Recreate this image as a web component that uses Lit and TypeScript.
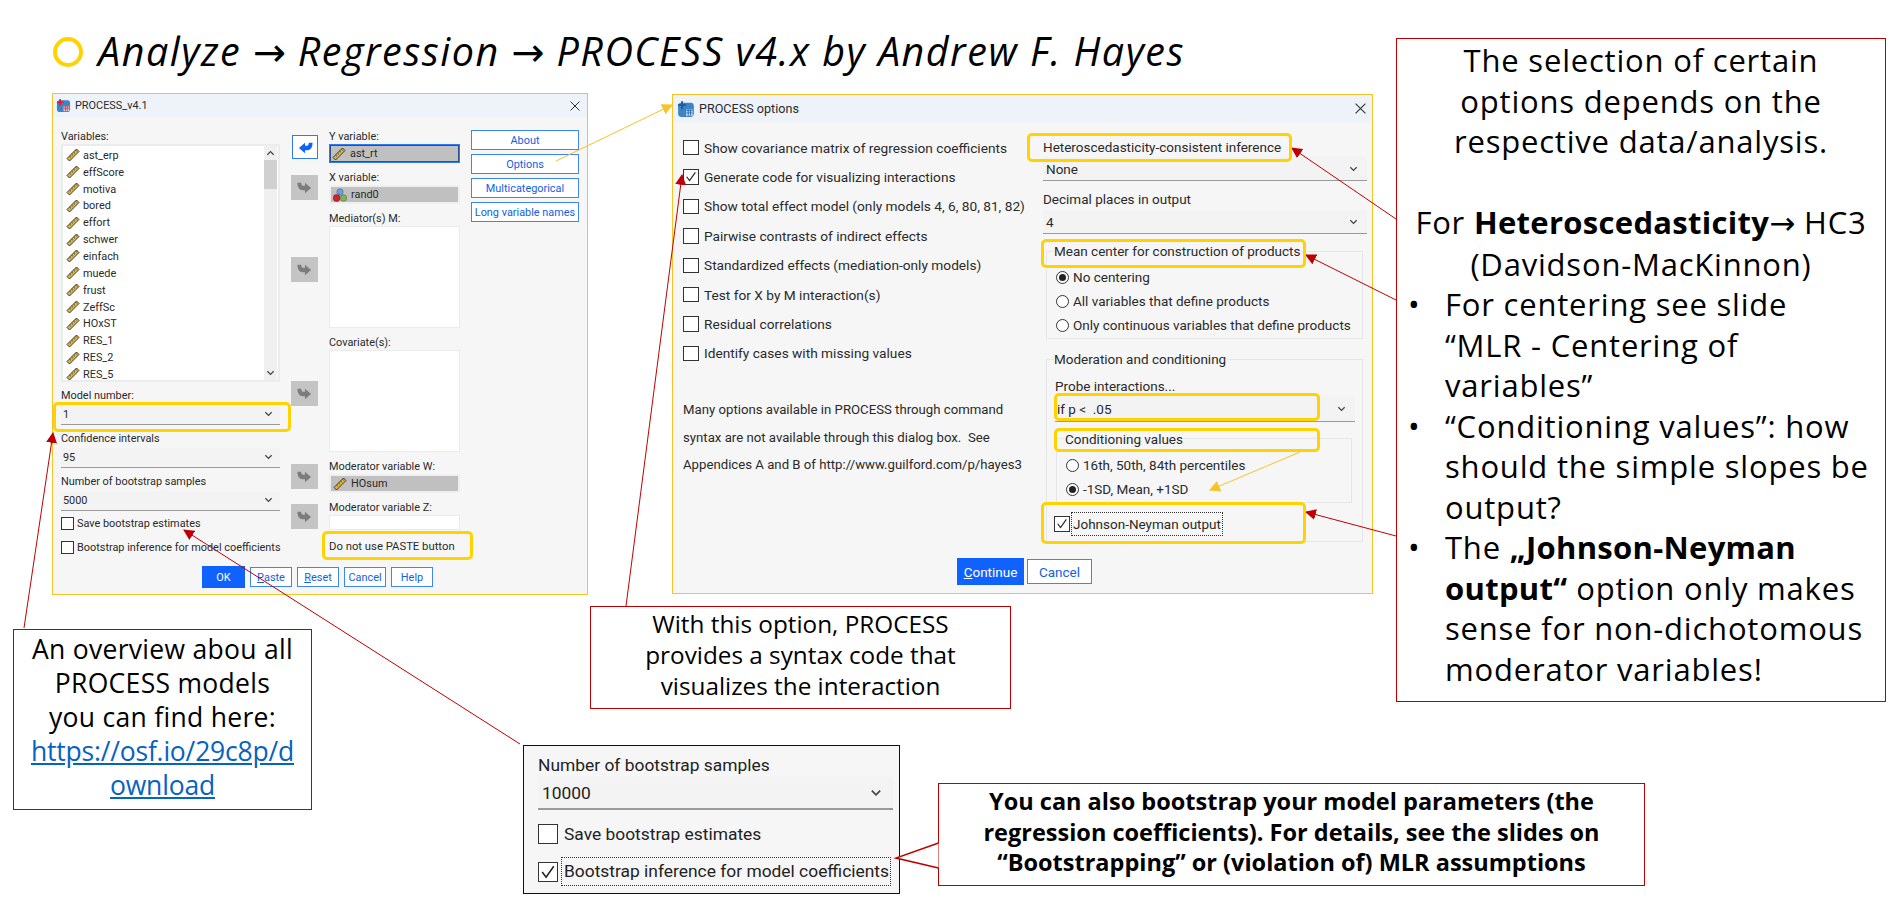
import { LitElement, css, html, svg } from 'lit'
import { customElement } from 'lit/decorators.js'

const VARIABLES = ['ast_erp', 'effScore', 'motiva', 'bored', 'effort', 'schwer', 'einfach', 'muede', 'frust', 'ZeffSc', 'HOxST', 'RES_1', 'RES_2', 'RES_5']
const ARROW_TOPS = [18, 16, 57, 99, 58, 15]
const OPTIONS = [
  'Show covariance matrix of regression coefficients',
  'Generate code for visualizing interactions',
  'Show total effect model (only models 4, 6, 80, 81, 82)',
  'Pairwise contrasts of indirect effects',
  'Standardized effects (mediation-only models)',
  'Test for X by M interaction(s)',
  'Residual correlations',
  'Identify cases with missing values',
]
// x, y, w, h of the yellow marker frames
const MARKERS = [
  [53, 402, 238, 30],
  [322, 531, 151, 29],
  [1027, 133, 265, 29],
  [1041, 239, 265, 29],
  [1054, 393, 266, 28],
  [1054, 428, 266, 24],
  [1041, 502, 265, 42],
]
const RED_ARROWS = [
  [24, 628, 53, 433],
  [520, 744, 184, 530],
  [626, 606, 682, 175],
  [1396, 219, 1292, 148],
  [1396, 300, 1306, 255],
  [1396, 536, 1306, 512],
]
const YELLOW_ARROWS = [
  [556, 161, 672, 105],
  [1300, 452, 1210, 490],
]

const ruler = () => html`<svg class="ico" viewBox="0 0 14 14">
  <path d="M1 10.5 10.5 1 13 3.5 3.5 13Z" fill="#e0b63c" stroke="#3a3a3a" stroke-width="1"/>
  <path d="M3.6 8 5 9.4M5.6 6 7 7.4M7.6 4 9 5.4M9.6 2.2 11 3.6" stroke="#3a3a3a" stroke-width=".8"/>
</svg>`

const nominal = () => html`<svg class="ico" viewBox="0 0 14 14">
  <circle cx="7" cy="4" r="3.2" fill="#6d9be0" stroke="#48689a" stroke-width=".6"/>
  <circle cx="3.6" cy="10" r="3.4" fill="#d3222b" stroke="#7d1a1f" stroke-width=".6"/>
  <circle cx="10.6" cy="10" r="3.2" fill="#7fb356" stroke="#52763a" stroke-width=".6"/>
</svg>`

const moveArrow = (active: boolean) => html`<svg class="move" viewBox="0 0 16 16">
  ${active
    ? svg`<path d="M1 8.5 7.5 3V6H9.5C11 6 11.5 5 11.5 3H15.5C15.5 8 13.5 11 10 11H7.5V14Z" fill="#0f62fe"/>`
    : svg`<path d="M15 8.5 8.5 3V6H6.5C5 6 4.5 5 4.5 3H.5C.5 8 2.5 11 6 11H8.5V14Z" fill="#7c7c7c"/>`}
</svg>`

const appIcon = (cross: string) => html`<svg class="app" viewBox="0 0 16 16">
  <rect x="1" y="2.5" width="14" height="12.5" rx="3" fill="#3d84c6"/>
  <rect x="8" y="8.5" width="6" height="5.5" fill="#c9dff2"/>
  <path d="M8 9.5H14M8 11.5H14M10 8.5V14M12 8.5V14" stroke="${cross}" stroke-width=".7"/>
  <path d="M1 4.5H8M4.5 1V8" stroke="${cross}" stroke-width="1.8"/>
</svg>`

const chevron = () => html`<svg class="chev" viewBox="0 0 10 6">
  <path d="M1.5 1 5 4.5 8.5 1" fill="none" stroke="#444" stroke-width="1.4"/>
</svg>`

const closeX = () => html`<svg class="close" viewBox="0 0 10 10">
  <path d="M.5 .5 9.5 9.5M9.5 .5 .5 9.5" stroke="#333" stroke-width="1"/>
</svg>`

const check = (on = false) => html`<span class="check">
  ${on ? html`<svg viewBox="0 0 14 14"><path d="M2.5 7 5.5 11 11.5 2.5" fill="none" stroke="#222" stroke-width="1.2"/></svg>` : ''}
</span>`

const radio = (on = false) => html`<span class="radio ${on ? 'on' : ''}"></span>`

const combo = (text: string, extra = '') => html`<div class="combo ${extra}"><span>${text}</span>${chevron()}</div>`

@customElement('app-root')
export class AppRoot extends LitElement {
  static styles = css`
    :host {
      display: block;
      position: relative;
      width: 1897px;
      height: 898px;
      overflow: hidden;
      background: #fff;
      font-family: 'Open Sans', Lato, sans-serif;
      color: #000;
    }
    .headline {
      position: absolute;
      left: 53px;
      top: 30px;
      display: flex;
      align-items: center;
      gap: 15px;
      font-size: 39.5px;
      font-style: italic;
      line-height: 42px;
      white-space: nowrap;
      letter-spacing: 1.5px;
    }
    .dot {
      width: 30px;
      height: 30px;
      box-sizing: border-box;
      border: 4px solid #ffd200;
      border-radius: 50%;
    }
    .arrow {
      font-family: 'DejaVu Sans', sans-serif;
      font-style: normal;
      letter-spacing: 0;
    }

    /* dialogs */
    .dialog {
      position: absolute;
      box-sizing: border-box;
      background: #f6f6f6;
      border: 1px solid #f7c325;
      font-family: Roboto, 'Liberation Sans', sans-serif;
      color: #2a2a2a;
    }
    .process {
      left: 52px;
      top: 93px;
      width: 536px;
      height: 502px;
      font-size: 10.9px;
    }
    .options {
      left: 672px;
      top: 94px;
      width: 701px;
      height: 500px;
      font-size: 13.5px;
    }
    .titlebar {
      display: flex;
      align-items: center;
      gap: 4px;
      background: #eef3fa;
      padding: 0 6px 0 3px;
    }
    .process .titlebar {
      height: 23px;
    }
    .options .titlebar {
      height: 27px;
      padding-left: 4px;
      font-size: 12.6px;
    }
    .app {
      width: 15px;
      height: 15px;
    }
    .options .app {
      width: 18px;
      height: 18px;
    }
    .close {
      width: 10px;
      height: 10px;
      margin-left: auto;
    }
    .process .close {
      margin-right: 1px;
    }
    .options .close {
      width: 11px;
      height: 11px;
    }
    .label {
      line-height: 15px;
      height: 15px;
      white-space: nowrap;
    }
    .ico {
      width: 14px;
      height: 14px;
      flex: none;
    }

    .columns {
      display: grid;
      grid-template-columns: 219px 27px 131px 108px;
      column-gap: 11px;
      padding: 12px 0 0 8px;
      height: 443px;
      box-sizing: border-box;
    }
    .col {
      display: flex;
      flex-direction: column;
    }
    .list {
      display: flex;
      height: 238px;
      box-sizing: border-box;
      border: 2px solid #ececec;
      background: #fff;
      overflow: hidden;
    }
    .rows {
      flex: 1;
      padding: 1px 0 0 3px;
    }
    .row {
      display: flex;
      align-items: center;
      gap: 3px;
      height: 16.85px;
    }
    .scroll {
      width: 13px;
      display: flex;
      flex-direction: column;
      align-items: center;
      background: #f0f0f0;
      margin-right: 1px;
    }
    .scroll .chev {
      margin: 4px 0;
    }
    .scroll .up {
      transform: rotate(180deg);
    }
    .thumb {
      width: 13px;
      height: 29px;
      background: #d0d0d0;
    }
    .scroll .chev:last-child {
      margin-top: auto;
    }
    .fields {
      display: flex;
      flex-direction: column;
      gap: 6.5px;
      margin-top: 6px;
    }
    .combo {
      display: flex;
      align-items: center;
      justify-content: space-between;
      box-sizing: border-box;
      height: 20px;
      padding: 0 7px 0 2px;
      background: #f3f3f3;
      border-bottom: 1.5px solid #9a9a9a;
    }
    .process .combo {
      margin-top: 1.5px;
    }
    .chev {
      width: 9px;
      height: 6px;
      flex: none;
    }
    .check {
      box-sizing: border-box;
      width: 13px;
      height: 13px;
      flex: none;
      background: #fff;
      border: 1px solid #333;
      display: flex;
    }
    .check svg {
      width: 100%;
      height: 100%;
    }
    .checkline {
      display: flex;
      align-items: center;
      gap: 3px;
      white-space: nowrap;
    }
    .process .checkline {
      height: 13px;
      margin-top: 11px;
    }
    .process .checkline.first {
      margin-top: 6.5px;
    }
    .move-btn {
      display: flex;
      align-items: center;
      justify-content: center;
      box-sizing: border-box;
      height: 25px;
      background: #c4c4c4;
    }
    .move-btn.active {
      height: 24px;
      margin-left: 1px;
      background: #fff;
      border: 1.5px solid #2f7bf6;
    }
    .move {
      width: 15px;
      height: 15px;
    }
    .stack {
      gap: 7px;
    }
    .slot {
      display: flex;
      align-items: center;
      gap: 4px;
      box-sizing: border-box;
      height: 19px;
      padding: 0 2px;
      background: #c0c0c0;
      border: 2px solid #efefef;
    }
    .slot.focus {
      border: 1px solid #2f7bf6;
      outline: 1px solid #2e4f8a;
      outline-offset: -2px;
    }
    .slot.blank {
      background: #fff;
      border: 1.5px solid #ebebeb;
      height: 15px;
    }
    .slot.tall {
      height: 102px;
    }
    .nopaste {
      font-size: 11.3px;
      line-height: 14px;
      margin-top: 3px;
      white-space: nowrap;
    }
    .side {
      display: flex;
      flex-direction: column;
      gap: 4px;
      padding-top: 1px;
    }
    .btn {
      display: flex;
      align-items: center;
      justify-content: center;
      box-sizing: border-box;
      height: 20px;
      background: #fff;
      border: 1.5px solid #3d86f5;
      color: #1260e8;
      white-space: nowrap;
    }
    .btn.primary {
      background: #0f62fe;
      border-color: #0f62fe;
      color: #fff;
    }
    .footer {
      display: flex;
      align-items: center;
      gap: 5px;
      margin: 6px 0 0 149px;
    }
    .footer .btn {
      width: 42px;
    }
    .footer .btn.primary {
      width: 43px;
      height: 22px;
    }
    .ul {
      text-decoration: underline;
    }

    /* options dialog */
    .opts-body {
      display: grid;
      grid-template-columns: 360px 324px;
      padding-left: 10px;
      height: 436px;
      box-sizing: border-box;
    }
    .opts-left {
      padding-top: 11px;
      font-size: 13.7px;
    }
    .opts-left .checkline {
      height: 29.4px;
      gap: 5px;
    }
    .options .check {
      width: 16px;
      height: 15.5px;
      border-color: #333;
    }
    .note {
      margin-top: 28px;
      font-size: 13.2px;
      line-height: 27.5px;
      white-space: nowrap;
    }
    .opts-right {
      display: flex;
      flex-direction: column;
      padding-top: 11px;
    }
    .opts-right .combo {
      height: 24px;
      padding: 0 9px 0 3px;
      flex: none;
    }
    .cap {
      line-height: 14px;
      white-space: nowrap;
    }
    .cap.hc {
      margin: 7px 0 3px;
    }
    .cap.dec {
      margin: 11px 0 4px;
    }
    .group {
      position: relative;
      box-sizing: border-box;
      width: 316.5px;
      margin-left: 3px;
      border: 1px solid #e6e6e6;
      flex: none;
    }
    .group.center {
      margin-top: 17px;
      height: 88px;
      padding: 13px 0 0 9px;
    }
    .group.moderation {
      margin-top: 20px;
      height: 183px;
      padding-top: 19px;
    }
    .group.values {
      width: 296px;
      height: 65px;
      margin: 16px 0 0 9px;
      padding: 14px 0 0 9px;
    }
    .legend {
      position: absolute;
      left: 6px;
      top: -8px;
      line-height: 14px;
      padding: 0 1px;
      background: #f6f6f6;
      white-space: nowrap;
    }
    .group.values .legend {
      left: 7px;
      top: -7px;
    }
    .radioline {
      display: flex;
      align-items: center;
      gap: 4px;
      height: 24px;
      white-space: nowrap;
    }
    .radio {
      box-sizing: border-box;
      width: 13px;
      height: 13px;
      flex: none;
      border: 1px solid #333;
      border-radius: 50%;
      background: #fff;
      display: flex;
      align-items: center;
      justify-content: center;
    }
    .radio.on::after {
      content: '';
      width: 7px;
      height: 7px;
      border-radius: 50%;
      background: #222;
    }
    .probe {
      margin-left: 8px;
      line-height: 14px;
    }
    .opts-right .combo.probe-combo {
      width: 300px;
      height: 26px;
      margin: 3px 0 0 8px;
      padding: 0 9px 0 2px;
    }
    .jn {
      display: flex;
      align-items: center;
      gap: 1px;
      margin: 9px 0 0 7px;
      height: 24px;
    }
    .dotted {
      border: 1px dotted #333;
      line-height: 22px;
      padding: 0 1px;
      white-space: nowrap;
    }
    .opts-footer {
      display: flex;
      align-items: center;
      gap: 3px;
      margin-left: 284px;
    }
    .opts-footer .btn {
      width: 65px;
      height: 25px;
    }
    .opts-footer .btn.primary {
      width: 67px;
      height: 27px;
    }

    /* inset crop */
    .inset {
      position: absolute;
      left: 523px;
      top: 745px;
      width: 377px;
      height: 149px;
      box-sizing: border-box;
      border: 1.5px solid #111;
      background: #f6f6f6;
      padding: 9px 6px 0 14px;
      font-family: Roboto, 'Liberation Sans', sans-serif;
      font-size: 17.4px;
      color: #222;
    }
    .inset .cap {
      line-height: 20px;
    }
    .inset .combo {
      height: 33px;
      margin-top: 2px;
      padding: 0 11px 0 4px;
      border-bottom-width: 2px;
    }
    .inset .chev {
      width: 12px;
      height: 8px;
    }
    .inset .checkline {
      gap: 6px;
      height: 20px;
      margin-top: 14px;
    }
    .inset .checkline.last {
      gap: 3px;
      height: 29px;
      margin-top: 13px;
    }
    .inset .check {
      width: 20px;
      height: 20px;
      border-width: 1.5px;
    }
    .inset .dotted {
      line-height: 27px;
      padding: 0 1px 0 2px;
    }

    /* callouts */
    .callout {
      position: absolute;
      box-sizing: border-box;
      background: #fff;
      border: 1.5px solid #c00000;
      text-align: center;
    }
    .callout.models {
      left: 13px;
      top: 629px;
      width: 299px;
      height: 181px;
      padding-top: 2px;
      font-size: 26.5px;
      line-height: 34px;
      letter-spacing: 0.3px;
    }
    .models a {
      color: #0563c1;
      text-decoration: underline;
      letter-spacing: -0.2px;
    }
    .callout.syntax {
      left: 590px;
      top: 606px;
      width: 421px;
      height: 103px;
      padding-top: 1px;
      font-size: 24.3px;
      line-height: 31px;
    }
    .callout.bootstrap {
      left: 938px;
      top: 783px;
      width: 707px;
      height: 103px;
      padding-top: 2px;
      font-size: 23.5px;
      line-height: 30.5px;
      font-weight: 700;
    }
    .callout.advice {
      left: 1396px;
      top: 38px;
      width: 490px;
      height: 664px;
      padding: 1px 0 0 0;
      font-size: 31px;
      line-height: 40.5px;
      letter-spacing: 0.8px;
    }
    .advice b {
      letter-spacing: 0.3px;
    }
    .blank-line {
      height: 40.5px;
    }
    .bullets {
      margin: 0;
      padding: 0;
      list-style: none;
      text-align: left;
    }
    .bullets li {
      display: grid;
      grid-template-columns: 37px 1fr;
      padding-left: 11px;
      white-space: nowrap;
    }
    .wires {
      position: absolute;
      left: 0;
      top: 0;
      pointer-events: none;
    }
    .marker {
      position: absolute;
      box-sizing: border-box;
      border: 3px solid #ffd200;
      border-radius: 5px;
      pointer-events: none;
    }
  `

  processDialog() {
    return html`<section class="dialog process">
      <div class="titlebar">${appIcon('#d81e2c')}<span>PROCESS_v4.1</span>${closeX()}</div>
      <div class="columns">
        <div class="col">
          <div class="label">Variables:</div>
          <div class="list">
            <div class="rows">
              ${VARIABLES.map((v) => html`<div class="row">${ruler()}<span>${v}</span></div>`)}
            </div>
            <div class="scroll">
              <svg class="chev up" viewBox="0 0 10 6"><path d="M1.5 1 5 4.5 8.5 1" fill="none" stroke="#444" stroke-width="1.4"/></svg>
              <div class="thumb"></div>
              ${chevron()}
            </div>
          </div>
          <div class="fields">
            <div><div class="label">Model number:</div>${combo('1')}</div>
            <div><div class="label">Confidence intervals</div>${combo('95')}</div>
            <div><div class="label">Number of bootstrap samples</div>${combo('5000')}</div>
          </div>
          <div class="checkline first">${check()}<span>Save bootstrap estimates</span></div>
          <div class="checkline">${check()}<span>Bootstrap inference for model coefficients</span></div>
        </div>
        <div class="col">
          ${ARROW_TOPS.map(
            (gap, i) => html`<div class="move-btn ${i === 0 ? 'active' : ''}" style="margin-top:${i === 0 ? 6 : gap}px">${moveArrow(i === 0)}</div>`,
          )}
        </div>
        <div class="col stack">
          <div><div class="label">Y variable:</div><div class="slot focus">${ruler()}<span>ast_rt</span></div></div>
          <div><div class="label">X variable:</div><div class="slot">${nominal()}<span>rand0</span></div></div>
          <div><div class="label">Mediator(s) M:</div><div class="slot blank tall"></div></div>
          <div><div class="label">Covariate(s):</div><div class="slot blank tall"></div></div>
          <div><div class="label">Moderator variable W:</div><div class="slot">${ruler()}<span>HOsum</span></div></div>
          <div><div class="label">Moderator variable Z:</div><div class="slot blank"></div></div>
          <div class="nopaste">Do not use PASTE button</div>
        </div>
        <div class="side">
          <div class="btn">About</div>
          <div class="btn">Options</div>
          <div class="btn">Multicategorical</div>
          <div class="btn">Long variable names</div>
        </div>
      </div>
      <div class="footer">
        <div class="btn primary">OK</div>
        <div class="btn"><span class="ul">P</span>aste</div>
        <div class="btn"><span class="ul">R</span>eset</div>
        <div class="btn">Cancel</div>
        <div class="btn">Help</div>
      </div>
    </section>`
  }

  optionsDialog() {
    return html`<section class="dialog options">
      <div class="titlebar">${appIcon('#1d5ea8')}<span>PROCESS options</span>${closeX()}</div>
      <div class="opts-body">
        <div class="opts-left">
          ${OPTIONS.map((o, i) => html`<div class="checkline">${check(i === 1)}<span>${o}</span></div>`)}
          <div class="note">
            Many options available in PROCESS through command<br />
            syntax are not available through this dialog box.&nbsp; See<br />
            Appendices A and B of http://www.guilford.com/p/hayes3
          </div>
        </div>
        <div class="opts-right">
          <div class="cap hc">Heteroscedasticity-consistent inference</div>
          ${combo('None')}
          <div class="cap dec">Decimal places in output</div>
          ${combo('4')}
          <div class="group center">
            <div class="legend">Mean center for construction of products</div>
            <div class="radioline">${radio(true)}<span>No centering</span></div>
            <div class="radioline">${radio()}<span>All variables that define products</span></div>
            <div class="radioline">${radio()}<span>Only continuous variables that define products</span></div>
          </div>
          <div class="group moderation">
            <div class="legend">Moderation and conditioning</div>
            <div class="probe">Probe interactions...</div>
            ${combo('if p <\u00a0 .05', 'probe-combo')}
            <div class="group values">
              <div class="legend">Conditioning values</div>
              <div class="radioline">${radio()}<span>16th, 50th, 84th percentiles</span></div>
              <div class="radioline">${radio(true)}<span>-1SD, Mean, +1SD</span></div>
            </div>
            <div class="jn">${check(true)}<span class="dotted">Johnson-Neyman output</span></div>
          </div>
        </div>
      </div>
      <div class="opts-footer">
        <div class="btn primary"><span><span class="ul">C</span>ontinue</span></div>
        <div class="btn">Cancel</div>
      </div>
    </section>`
  }

  insetCrop() {
    return html`<section class="inset">
      <div class="cap">Number of bootstrap samples</div>
      ${combo('10000')}
      <div class="checkline">${check()}<span>Save bootstrap estimates</span></div>
      <div class="checkline last">${check(true)}<span class="dotted">Bootstrap inference for model coefficients</span></div>
    </section>`
  }

  wires() {
    return html`<svg class="wires" width="1897" height="898" viewBox="0 0 1897 898">
      <defs>
        <marker id="red" viewBox="0 0 10 10" refX="9" refY="5" markerWidth="11" markerHeight="11" markerUnits="userSpaceOnUse" orient="auto">
          <path d="M0 0 10 5 0 10Z" fill="#c00000"/>
        </marker>
        <marker id="yellow" viewBox="0 0 10 10" refX="9" refY="5" markerWidth="11" markerHeight="11" markerUnits="userSpaceOnUse" orient="auto">
          <path d="M0 0 10 5 0 10Z" fill="#f7c325"/>
        </marker>
      </defs>
      ${RED_ARROWS.map(
        ([x1, y1, x2, y2]) => svg`<line x1=${x1} y1=${y1} x2=${x2} y2=${y2} stroke="#c00000" stroke-width="1" marker-end="url(#red)"/>`,
      )}
      ${YELLOW_ARROWS.map(
        ([x1, y1, x2, y2]) => svg`<line x1=${x1} y1=${y1} x2=${x2} y2=${y2} stroke="#f7c325" stroke-width="1" marker-end="url(#yellow)"/>`,
      )}
      <path d="M938.5 843 896 858 938.5 868" fill="#fff" stroke="#c00000" stroke-width="1.5"/>
    </svg>`
  }

  render() {
    return html`
      <header class="headline">
        <span class="dot"></span>
        <span>Analyze <span class="arrow">→</span> Regression <span class="arrow">→</span> PROCESS v4.x by Andrew F. Hayes</span>
      </header>
      ${this.processDialog()} ${this.optionsDialog()} ${this.insetCrop()}
      <aside class="callout models">
        An overview abou all<br />PROCESS models<br />you can find here:<br />
        <a href="#">https://osf.io/29c8p/d<br />ownload</a>
      </aside>
      <aside class="callout syntax">With this option, PROCESS<br />provides a syntax code that<br />visualizes the interaction</aside>
      <aside class="callout bootstrap">
        You can also bootstrap your model parameters (the<br />regression coefficients). For details, see the slides on<br />“Bootstrapping” or (violation of) MLR assumptions
      </aside>
      <aside class="callout advice">
        The selection of certain<br />options depends on the<br />respective data/analysis.
        <div class="blank-line"></div>
        For <b>Heteroscedasticity</b><span class="arrow">→</span> HC3<br />(Davidson-MacKinnon)
        <ul class="bullets">
          <li><span>•</span><span>For centering see slide<br />“MLR - Centering of<br />variables”</span></li>
          <li><span>•</span><span>“Conditioning values”: how<br />should the simple slopes be<br />output?</span></li>
          <li><span>•</span><span>The <b>„Johnson-Neyman<br />output“</b> option only makes<br />sense for non-dichotomous<br />moderator variables!</span></li>
        </ul>
      </aside>
      ${this.wires()}
      ${MARKERS.map(
        ([x, y, w, h]) => html`<div class="marker" style="left:${x}px;top:${y}px;width:${w}px;height:${h}px"></div>`,
      )}
    `
  }
}
